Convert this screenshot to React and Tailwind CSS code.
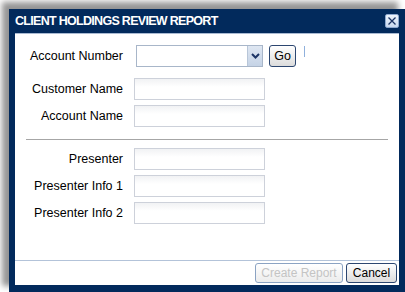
import React from 'react';

const font = { fontFamily: '"Liberation Sans", Arial, sans-serif' };

const TextBox = () => (
  <div className="w-[131px] h-[22px] border border-[#cdd1da] bg-gradient-to-b from-[#f1f2f4] to-white to-[40%]" />
);

const Row = ({ label, children }) => (
  <div className="flex items-center h-[22px]">
    <div className="w-[108px] text-right text-[12.5px] text-black leading-none">{label}</div>
    <div className="ml-[11px] flex items-center">{children}</div>
  </div>
);

const App = () => {
  return (
    <div className="w-[405px] h-[292px] bg-white pl-[9px] pt-[9px] overflow-hidden" style={font}>
      <div className="w-[396px] h-[284px] bg-[#022a5c] px-[6px] pb-[8px] flex flex-col shadow-[-7px_-7px_6px_rgba(0,0,0,0.42)]">
        {/* title bar */}
        <div className="h-[24px] flex items-center justify-between">
          <span className="text-white font-bold text-[12.5px] tracking-[-0.7px] leading-none pt-[1px]">
            CLIENT HOLDINGS REVIEW REPORT
          </span>
          <button className="w-[14px] h-[14px] rounded-[2px] border border-[#8ea9cf] bg-gradient-to-b from-[#eef4fc] to-[#c9d9ef] flex items-center justify-center">
            <svg width="10" height="10" viewBox="0 0 10 10">
              <path d="M1.5 1.5 L8.5 8.5 M8.5 1.5 L1.5 8.5" stroke="#1c3464" strokeWidth="1.3" />
            </svg>
          </button>
        </div>

        {/* body */}
        <div className="flex-1 bg-white border-t border-[#a9bad2] flex flex-col">
          <div className="pt-[11px]">
            <div className="flex items-center h-[22px]">
              <div className="w-[108px] text-right text-[12.5px] text-black leading-none">Account Number</div>
              <div className="ml-[13px] w-[127px] h-[22px] border border-[#a8b6c9] flex">
                <div className="flex-1 bg-white" />
                <div className="w-[15px] border-l border-[#b8c6d8] bg-gradient-to-b from-[#dfe7f2] to-[#c5d3e6] flex items-center justify-center">
                  <svg width="9" height="6" viewBox="0 0 9 6">
                    <path d="M1 1 L4.5 4.5 L8 1" stroke="#1d3566" strokeWidth="2" fill="none" />
                  </svg>
                </div>
              </div>
              <button className="ml-[6px] w-[27px] h-[22px] rounded-[3px] border border-[#2c4670] bg-gradient-to-b from-white to-[#dcdcdc] text-[12.5px] text-black leading-none">
                Go
              </button>
              <div className="ml-[8px] w-px h-[11px] bg-[#8fb0dc] self-start mt-[1px]" />
            </div>

            <div className="mt-[11px] flex flex-col gap-[5px]">
              <Row label="Customer Name"><TextBox /></Row>
              <Row label="Account Name"><TextBox /></Row>
            </div>

            <div className="mt-[12px] mx-[11px] border-t border-[#a6a6a6]" />

            <div className="mt-[8px] flex flex-col gap-[5px]">
              <Row label="Presenter"><TextBox /></Row>
              <Row label="Presenter Info 1"><TextBox /></Row>
              <Row label="Presenter Info 2"><TextBox /></Row>
            </div>
          </div>

          {/* footer */}
          <div className="mt-auto border-t border-[#b3c3d9] flex justify-end gap-[3px] pt-[2px] pb-[2px] pr-[2px]">
            <button className="w-[88px] h-[20px] rounded-[3px] border border-[#8ba3c3] bg-gradient-to-b from-white to-[#ececec] text-[12px] text-[#c4c4c4] leading-none">
              Create Report
            </button>
            <button className="w-[51px] h-[20px] rounded-[3px] border border-[#2c4670] bg-gradient-to-b from-white to-[#dcdcdc] text-[12px] text-black leading-none">
              Cancel
            </button>
          </div>
        </div>
      </div>
    </div>
  );
};

export default App;
